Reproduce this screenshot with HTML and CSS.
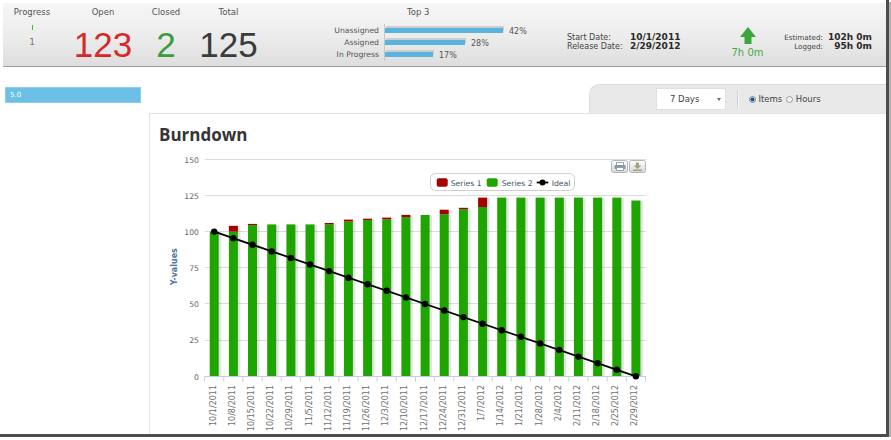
FILE: index.html
```html
<!DOCTYPE html>
<html>
<head>
<meta charset="utf-8">
<title>Burndown</title>
<link rel="stylesheet" href="styles.css">
</head>
<body>
<div class="frame">
  <header class="summary">
    <div class="stat stat-progress">
      <div class="stat-title">Progress</div>
      <div class="progress-tick"></div>
      <div class="progress-val">1</div>
    </div>
    <div class="stat stat-open">
      <div class="stat-title">Open</div>
      <div class="stat-num num-open">123</div>
    </div>
    <div class="stat stat-closed">
      <div class="stat-title">Closed</div>
      <div class="stat-num num-closed">2</div>
    </div>
    <div class="stat stat-total">
      <div class="stat-title">Total</div>
      <div class="stat-num num-total">125</div>
    </div>
    <div class="top3">
      <div class="top3-title">Top 3</div>
      <div class="top3-body">
        <div class="top3-labels">
          <div>Unassigned</div>
          <div>Assigned</div>
          <div>In Progress</div>
        </div>
        <div class="top3-bars">
          <div class="bar-row"><span class="bar" style="width:118px"></span><span class="pct">42%</span></div>
          <div class="bar-row"><span class="bar" style="width:80px"></span><span class="pct">28%</span></div>
          <div class="bar-row"><span class="bar" style="width:48px"></span><span class="pct">17%</span></div>
        </div>
      </div>
    </div>
    <div class="dates">
      <span class="lbl">Start Date:</span><span class="val">10/1/2011</span>
      <span class="lbl">Release Date:</span><span class="val">2/29/2012</span>
    </div>
    <div class="trend">
      <svg class="trend-arrow" width="16" height="17" viewBox="0 0 16 17"><path d="M8 0 L16 10 L11.5 10 L11.5 17 L4.5 17 L4.5 10 L0 10 Z"/></svg>
      <div class="trend-val">7h 0m</div>
    </div>
    <div class="effort">
      <span class="lbl">Estimated:</span><span class="val">102h 0m</span>
      <span class="lbl">Logged:</span><span class="val">95h 0m</span>
    </div>
  </header>

  <div class="content">
    <aside class="sidebar">
      <div class="version">5.0</div>
    </aside>
    <main class="main">
      <div class="toolbar">
        <div class="tab">
          <div class="select"><span>7 Days</span><span class="caret"></span></div>
          <div class="sep"></div>
          <label class="radio-opt"><span class="radio on"></span>Items</label>
          <label class="radio-opt"><span class="radio"></span>Hours</label>
        </div>
      </div>
      <section class="panel">
        <h1 class="panel-title">Burndown</h1>
        <svg class="chart" width="736" height="288" viewBox="150 146 736 288">
          <!-- grid -->
          <g class="grid">
            <line x1="204.6" y1="159.5" x2="646" y2="159.5"/>
            <line x1="204.6" y1="195.5" x2="646" y2="195.5"/>
            <line x1="204.6" y1="231.5" x2="646" y2="231.5"/>
            <line x1="204.6" y1="267.5" x2="646" y2="267.5"/>
            <line x1="204.6" y1="303.5" x2="646" y2="303.5"/>
            <line x1="204.6" y1="340.5" x2="646" y2="340.5"/>
          </g>
          <g class="ylab">
            <text x="199" y="162.6">150</text>
            <text x="199" y="198.6">125</text>
            <text x="199" y="234.8">100</text>
            <text x="199" y="271">75</text>
            <text x="199" y="307">50</text>
            <text x="199" y="343.3">25</text>
            <text x="199" y="379.5">0</text>
          </g>
          <text class="ytitle" transform="translate(176.5,266.7) rotate(-90)">Y-values</text>

          <!-- bar shadows -->
          <g class="bar-shadow">
            <rect x="211.2" y="232.1" width="10" height="144.2"/>
            <rect x="230.4" y="226.3" width="10" height="150"/>
            <rect x="249.5" y="224.4" width="10" height="151.9"/>
            <rect x="268.7" y="224.9" width="10" height="151.4"/>
            <rect x="287.9" y="224.9" width="10" height="151.4"/>
            <rect x="307.0" y="224.9" width="10" height="151.4"/>
            <rect x="326.2" y="223.5" width="10" height="152.8"/>
            <rect x="345.4" y="220.1" width="10" height="156.2"/>
            <rect x="364.6" y="219.2" width="10" height="157.1"/>
            <rect x="383.7" y="218.1" width="10" height="158.2"/>
            <rect x="402.9" y="215.4" width="10" height="160.9"/>
            <rect x="422.1" y="215.5" width="10" height="160.8"/>
            <rect x="441.2" y="210.2" width="10" height="166.1"/>
            <rect x="460.4" y="208.3" width="10" height="168"/>
            <rect x="479.6" y="198.1" width="10" height="178.2"/>
            <rect x="498.7" y="198.1" width="10" height="178.2"/>
            <rect x="517.9" y="198.1" width="10" height="178.2"/>
            <rect x="537.1" y="198.1" width="10" height="178.2"/>
            <rect x="556.3" y="198.1" width="10" height="178.2"/>
            <rect x="575.4" y="198.1" width="10" height="178.2"/>
            <rect x="594.6" y="198.1" width="10" height="178.2"/>
            <rect x="613.8" y="198.1" width="10" height="178.2"/>
            <rect x="632.9" y="201.0" width="10" height="175.3"/>
          </g>
          <!-- series 2 (green) -->
          <g class="s2">
            <rect x="209.7" y="231.6" width="9" height="144.7"/>
            <rect x="228.9" y="231.6" width="9" height="144.7"/>
            <rect x="248.0" y="225.1" width="9" height="151.2"/>
            <rect x="267.2" y="224.4" width="9" height="151.9"/>
            <rect x="286.4" y="224.4" width="9" height="151.9"/>
            <rect x="305.5" y="224.4" width="9" height="151.9"/>
            <rect x="324.7" y="224.4" width="9" height="151.9"/>
            <rect x="343.9" y="221.5" width="9" height="154.8"/>
            <rect x="363.1" y="220.1" width="9" height="156.2"/>
            <rect x="382.2" y="219.3" width="9" height="157.0"/>
            <rect x="401.4" y="217.2" width="9" height="159.1"/>
            <rect x="420.6" y="215.0" width="9" height="161.3"/>
            <rect x="439.7" y="214.3" width="9" height="162.0"/>
            <rect x="458.9" y="209.2" width="9" height="167.1"/>
            <rect x="478.1" y="207.0" width="9" height="169.3"/>
            <rect x="497.2" y="197.6" width="9" height="178.7"/>
            <rect x="516.4" y="197.6" width="9" height="178.7"/>
            <rect x="535.6" y="197.6" width="9" height="178.7"/>
            <rect x="554.8" y="197.6" width="9" height="178.7"/>
            <rect x="573.9" y="197.6" width="9" height="178.7"/>
            <rect x="593.1" y="197.6" width="9" height="178.7"/>
            <rect x="612.3" y="197.6" width="9" height="178.7"/>
            <rect x="631.4" y="200.5" width="9" height="175.8"/>
          </g>
          <!-- series 1 (red) -->
          <g class="s1">
            <rect x="228.9" y="225.8" width="9" height="5.8"/>
            <rect x="248.0" y="223.9" width="9" height="1.2"/>
            <rect x="324.7" y="223.0" width="9" height="1.4"/>
            <rect x="343.9" y="219.6" width="9" height="1.9"/>
            <rect x="363.1" y="218.7" width="9" height="1.4"/>
            <rect x="382.2" y="217.6" width="9" height="1.7"/>
            <rect x="401.4" y="214.9" width="9" height="2.3"/>
            <rect x="439.7" y="209.7" width="9" height="4.6"/>
            <rect x="458.9" y="207.8" width="9" height="1.4"/>
            <rect x="478.1" y="197.6" width="9" height="9.4"/>
          </g>

          <!-- x axis -->
          <line class="xaxis" x1="204.6" y1="376.5" x2="646" y2="376.5"/>
          <path class="xticks" d="M204.6 376.5v5M223.8 376.5v5M242.9 376.5v5M262.1 376.5v5M281.3 376.5v5M300.5 376.5v5M319.6 376.5v5M338.8 376.5v5M358 376.5v5M377.1 376.5v5M396.3 376.5v5M415.5 376.5v5M434.6 376.5v5M453.8 376.5v5M473 376.5v5M492.2 376.5v5M511.3 376.5v5M530.5 376.5v5M549.7 376.5v5M568.8 376.5v5M588 376.5v5M607.2 376.5v5M626.3 376.5v5M645.5 376.5v5"/>

          <!-- ideal line -->
          <line class="ideal" x1="214.2" y1="231.6" x2="635.9" y2="376.3"/>
          <g class="dots">
            <circle cx="214.2" cy="231.6" r="3.2"/>
            <circle cx="233.4" cy="238.2" r="3.2"/>
            <circle cx="252.5" cy="244.8" r="3.2"/>
            <circle cx="271.7" cy="251.4" r="3.2"/>
            <circle cx="290.9" cy="257.9" r="3.2"/>
            <circle cx="310.0" cy="264.5" r="3.2"/>
            <circle cx="329.2" cy="271.1" r="3.2"/>
            <circle cx="348.4" cy="277.7" r="3.2"/>
            <circle cx="367.6" cy="284.2" r="3.2"/>
            <circle cx="386.7" cy="290.8" r="3.2"/>
            <circle cx="405.9" cy="297.4" r="3.2"/>
            <circle cx="425.1" cy="304.0" r="3.2"/>
            <circle cx="444.2" cy="310.5" r="3.2"/>
            <circle cx="463.4" cy="317.1" r="3.2"/>
            <circle cx="482.6" cy="323.7" r="3.2"/>
            <circle cx="501.7" cy="330.3" r="3.2"/>
            <circle cx="520.9" cy="336.8" r="3.2"/>
            <circle cx="540.1" cy="343.4" r="3.2"/>
            <circle cx="559.3" cy="350.0" r="3.2"/>
            <circle cx="578.4" cy="356.6" r="3.2"/>
            <circle cx="597.6" cy="363.2" r="3.2"/>
            <circle cx="616.8" cy="369.7" r="3.2"/>
            <circle cx="635.9" cy="376.3" r="3.2"/>
          </g>

          <!-- x labels -->
          <g class="xlab">
            <text transform="translate(215.7,385) rotate(-90)">10/1/2011</text>
            <text transform="translate(234.9,385) rotate(-90)">10/8/2011</text>
            <text transform="translate(254.0,385) rotate(-90)">10/15/2011</text>
            <text transform="translate(273.2,385) rotate(-90)">10/22/2011</text>
            <text transform="translate(292.4,385) rotate(-90)">10/29/2011</text>
            <text transform="translate(311.5,385) rotate(-90)">11/5/2011</text>
            <text transform="translate(330.7,385) rotate(-90)">11/12/2011</text>
            <text transform="translate(349.9,385) rotate(-90)">11/19/2011</text>
            <text transform="translate(369.1,385) rotate(-90)">11/26/2011</text>
            <text transform="translate(388.2,385) rotate(-90)">12/3/2011</text>
            <text transform="translate(407.4,385) rotate(-90)">12/10/2011</text>
            <text transform="translate(426.6,385) rotate(-90)">12/17/2011</text>
            <text transform="translate(445.7,385) rotate(-90)">12/24/2011</text>
            <text transform="translate(464.9,385) rotate(-90)">12/31/2011</text>
            <text transform="translate(484.1,385) rotate(-90)">1/7/2012</text>
            <text transform="translate(503.2,385) rotate(-90)">1/14/2012</text>
            <text transform="translate(522.4,385) rotate(-90)">1/21/2012</text>
            <text transform="translate(541.6,385) rotate(-90)">1/28/2012</text>
            <text transform="translate(560.8,385) rotate(-90)">2/4/2012</text>
            <text transform="translate(579.9,385) rotate(-90)">2/11/2012</text>
            <text transform="translate(599.1,385) rotate(-90)">2/18/2012</text>
            <text transform="translate(618.3,385) rotate(-90)">2/25/2012</text>
            <text transform="translate(637.4,385) rotate(-90)">2/29/2012</text>
          </g>

          <!-- legend -->
          <rect class="legend-box" x="430.5" y="173.5" width="144" height="17" rx="5"/>
          <rect class="leg-s1" x="436.7" y="178.3" width="11" height="8.4" rx="2"/>
          <text class="legend-text" x="450.7" y="186.2">Series 1</text>
          <rect class="leg-s2" x="486.7" y="178.3" width="11" height="8.4" rx="2"/>
          <text class="legend-text" x="501.7" y="186.2">Series 2</text>
          <line class="leg-line" x1="536.7" y1="182.5" x2="548.3" y2="182.5"/>
          <circle class="leg-dot" cx="542.5" cy="182.5" r="3"/>
          <text class="legend-text" x="551.7" y="186.2">Ideal</text>

          <!-- export buttons -->
          <defs>
            <linearGradient id="btnGrad" x1="0" y1="0" x2="0" y2="1">
              <stop offset="0" stop-color="#ffffff"/>
              <stop offset="1" stop-color="#d8d8d8"/>
            </linearGradient>
          </defs>
          <rect class="exp-btn" x="611.5" y="160.5" width="16" height="12" rx="2"/>
          <rect class="print-paper" x="616.5" y="162.5" width="7" height="3"/>
          <rect class="print-body" x="614.5" y="165" width="11" height="4" rx="1"/>
          <rect class="print-paper" x="616.5" y="167.5" width="7" height="3"/>
          <rect class="exp-btn" x="629.5" y="160.5" width="16" height="12" rx="2"/>
          <path class="dl-icon" d="M636 162.5h3v3h2.5l-4 3.5l-4-3.5h2.5z"/>
          <rect class="dl-icon" x="633" y="169.5" width="9" height="1.5"/>
        </svg>
      </section>
    </main>
  </div>
</div>
</body>
</html>
```

FILE: styles.css
```css
* {
  box-sizing: border-box;
}

body {
  margin: 0;
  background: #ffffff;
  font-family: "DejaVu Sans", Verdana, sans-serif;
  color: #444;
}

.frame {
  width: 889px;
  height: 437px;
  background: #ffffff;
  border-right: 3px solid #4d4d4d;
  border-bottom: 3px solid #4d4d4d;
  box-shadow: 2px 2px 1px rgba(0, 0, 0, 0.3);
  overflow: hidden;
}

/* ---------- summary header ---------- */
.summary {
  display: flex;
  margin: 3px 0 0 3px;
  height: 64px;
  background: linear-gradient(to bottom, #f6f6f6 0%, #ededed 50%, #dedede 100%);
  border-bottom: 1px solid #9c9c9c;
}

.stat {
  flex: none;
  display: flex;
  flex-direction: column;
  align-items: center;
  padding-top: 4px;
}

.stat-progress { width: 58px; }
.stat-open { width: 84px; }
.stat-closed { width: 42px; }
.stat-total { width: 83px; }

.stat-title {
  font-size: 8.5px;
  line-height: 11px;
  color: #555;
}

.progress-tick {
  width: 1px;
  height: 5px;
  margin-top: 7px;
  background: #35c035;
}

.progress-val {
  margin-top: 7px;
  font-size: 9px;
  line-height: 11px;
  color: #777;
}

.stat-num {
  margin-top: 9px;
  font-family: "Liberation Sans", Arial, sans-serif;
  font-size: 35px;
  line-height: 35px;
}

.num-open { color: #d42a2a; }
.num-closed { color: #3a9c3a; }
.num-total { color: #3b3b3b; }

/* top 3 */
.top3 {
  flex: none;
  width: 260px;
  padding-top: 4px;
}

.top3-title {
  padding-left: 137px;
  font-size: 8.5px;
  line-height: 11px;
  color: #555;
}

.top3-body {
  display: flex;
  margin-top: 6px;
}

.top3-labels {
  width: 109px;
  padding-top: 1px;
  text-align: right;
  font-size: 7.7px;
  color: #555;
}

.top3-labels div {
  height: 12px;
  line-height: 12px;
}

.top3-bars {
  margin-left: 5px;
  padding-top: 1px;
  border-left: 1px solid #c6c6c6;
}

.bar-row {
  display: flex;
  align-items: center;
  height: 12px;
}

.bar {
  height: 5px;
  margin-top: -1px;
  background: #58b3de;
  box-shadow: 1px -2px 0 #cdcdcd;
}

.pct {
  margin-left: 6px;
  font-size: 8px;
  color: #555;
}

/* dates */
.dates {
  flex: none;
  width: 150px;
  margin-left: 37px;
  padding-top: 30px;
  display: grid;
  grid-template-columns: 63px auto;
  align-content: start;
  line-height: 9px;
}

.dates .lbl,
.effort .lbl {
  font-size: 8px;
  color: #444;
}

.dates .val,
.effort .val {
  font-size: 9px;
  font-weight: bold;
  color: #2a2a2a;
}

/* trend */
.trend {
  flex: none;
  width: 61px;
  padding-top: 24px;
  display: flex;
  flex-direction: column;
  align-items: center;
}

.trend-arrow {
  display: block;
  fill: #3ca63c;
}

.trend-val {
  margin-top: 3px;
  font-size: 10px;
  line-height: 12px;
  color: #47a847;
}

/* effort */
.effort {
  flex: none;
  padding-top: 30px;
  display: grid;
  grid-template-columns: 45px 46px;
  column-gap: 3px;
  align-content: start;
  line-height: 9px;
  text-align: right;
}

.effort .lbl {
  font-size: 7.2px;
}

/* ---------- content ---------- */
.content {
  display: flex;
  height: 367px;
}

.sidebar {
  flex: none;
  width: 149px;
  padding: 20px 0 0 5px;
}

.version {
  width: 136px;
  height: 16px;
  padding-left: 4px;
  background: #6cc0e6;
  border: 1px solid #8bcdec;
  color: #ffffff;
  font-size: 7px;
  line-height: 14px;
}

.main {
  flex: 1;
  display: flex;
  flex-direction: column;
  min-width: 0;
}

.toolbar {
  display: flex;
  justify-content: flex-end;
  margin-top: 17px;
  height: 29px;
}

.tab {
  width: 297px;
  display: flex;
  align-items: center;
  padding-left: 66px;
  background: #e9e9e9;
  border-top: 1px solid #dcdcdc;
  border-left: 1px solid #dcdcdc;
  border-radius: 10px 0 0 0;
}

.select {
  width: 70px;
  height: 22px;
  display: flex;
  align-items: center;
  justify-content: space-between;
  padding: 0 4px 0 13px;
  background: #ffffff;
  border: 1px solid #e0e0e0;
  font-size: 8.5px;
  color: #444;
}

.caret {
  width: 0;
  height: 0;
  border-left: 2.5px solid transparent;
  border-right: 2.5px solid transparent;
  border-top: 3px solid #6a6a6a;
}

.sep {
  width: 1px;
  height: 19px;
  margin: 0 11px;
  background: #d0d0d0;
  box-shadow: 1px 0 0 #f7f7f7;
}

.radio-opt {
  display: flex;
  align-items: center;
  margin-right: 4px;
  font-size: 8.5px;
  color: #444;
}

.radio {
  width: 7px;
  height: 7px;
  margin-right: 2.5px;
  border-radius: 50%;
  border: 1px solid #9a9a9a;
  background: #f4f4f4;
}

.radio.on {
  background: radial-gradient(circle, #1d4e7c 0, #1d4e7c 1.5px, #d7e3ee 2.3px);
  border-color: #7d8a96;
}

.panel {
  flex: 1;
  border-top: 1px solid #e3e3e3;
  border-left: 1px solid #e3e3e3;
}

.panel-title {
  margin: 0;
  padding: 9px 0 0 9px;
  font-family: "Open Sans", "DejaVu Sans", sans-serif;
  font-weight: 700;
  font-size: 17px;
  line-height: 23px;
  color: #353535;
}

.chart {
  display: block;
}

/* ---------- chart svg ---------- */
.grid line {
  stroke: #dcdcdc;
  stroke-width: 1;
}

.ylab text {
  font-family: "DejaVu Sans", sans-serif;
  font-size: 7.7px;
  fill: #666;
  text-anchor: end;
}

.ytitle {
  font-family: "DejaVu Sans", sans-serif;
  font-size: 8px;
  font-weight: bold;
  fill: #4d759e;
  text-anchor: middle;
}

.bar-shadow rect {
  fill: #000;
  opacity: 0.11;
}

.s2 rect {
  fill: #1fa500;
}

.s1 rect {
  fill: #a50000;
}

.xaxis {
  stroke: #c0d0e0;
  stroke-width: 1;
}

.xticks {
  stroke: #c0d0e0;
  stroke-width: 1;
  fill: none;
}

.ideal {
  stroke: #000;
  stroke-width: 1.8;
}

.dots circle {
  fill: #000;
}

.xlab text {
  font-family: "DejaVu Sans", sans-serif;
  font-size: 8px;
  fill: #707070;
  text-anchor: end;
}

.legend-box {
  fill: #ffffff;
  stroke: #cfcfcf;
  stroke-width: 1;
}

.leg-s1 { fill: #a50000; }
.leg-s2 { fill: #1fa500; }

.leg-line {
  stroke: #000;
  stroke-width: 1.8;
}

.leg-dot { fill: #000; }

.legend-text {
  font-family: "DejaVu Sans", sans-serif;
  font-size: 7.7px;
  fill: #3e576f;
}

.exp-btn {
  fill: url(#btnGrad);
  stroke: #b5b5b5;
  stroke-width: 1;
}

.print-body {
  fill: #8797ab;
}

.print-paper {
  fill: #ffffff;
  stroke: #8797ab;
  stroke-width: 0.8;
}

.dl-icon {
  fill: #a3a37e;
}
```
